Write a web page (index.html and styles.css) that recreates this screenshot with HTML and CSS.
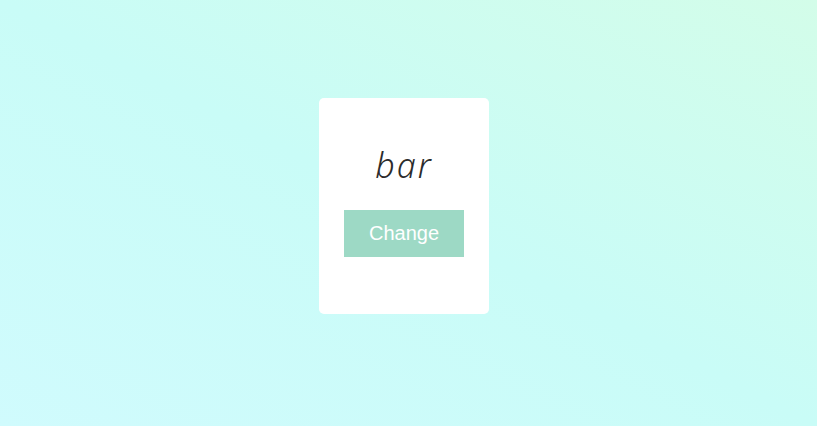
FILE: index.html
```html
<!DOCTYPE html>
<html lang="en">
<head>
    <meta charset="UTF-8">
    <meta name="viewport" content="width=device-width, initial-scale=1.0">
    <title>Word Card</title>
    <link rel="stylesheet" href="styles.css">
</head>
<body>
    <div class="card">
        <p class="word">bar</p>
        <button class="change-btn">Change</button>
    </div>
</body>
</html>
```

FILE: styles.css
```css
html, body {
    height: 100%;
}

body {
    margin: 0;
    background: linear-gradient(to top right, #d0fbfd, #c9fcf7 50%, #d3fde9);
    display: flex;
    align-items: center;
    justify-content: center;
}

.card {
    width: 170px;
    height: 216px;
    margin: -14px 0 0 -9px;
    background-color: #ffffff;
    border-radius: 5px;
    box-sizing: border-box;
    padding-top: 46px;
    display: flex;
    flex-direction: column;
    align-items: center;
}

.word {
    margin: 0 0 24px;
    font-family: 'Noto Sans', sans-serif;
    font-style: italic;
    font-weight: 300;
    font-size: 34px;
    line-height: 42px;
    letter-spacing: 2px;
    color: #2b2b2b;
}

.change-btn {
    width: 120px;
    height: 47px;
    border: none;
    background-color: #9dd9c5;
    color: #fff;
    font-family: 'Liberation Sans', Arial, sans-serif;
    font-size: 20px;
    cursor: pointer;
}
```
